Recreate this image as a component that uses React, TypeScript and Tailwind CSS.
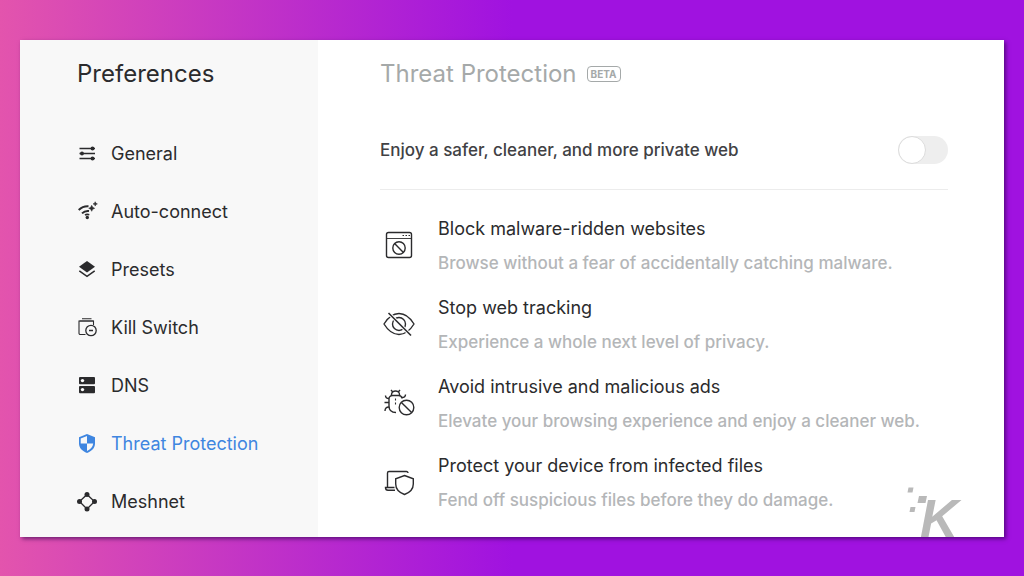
import { useState } from "react";
import type { ReactNode } from "react";

interface NavItem {
  label: string;
  icon: ReactNode;
}

interface Feature {
  title: string;
  description: string;
  icon: ReactNode;
}

function GeneralIcon() {
  return (
    <svg viewBox="0 0 20 20" className="size-5" fill="none" stroke="currentColor" strokeWidth="1.3" aria-hidden="true">
      <path d="M2.500 4.500H18M2.500 9.500H18M2.500 14.500H18" />
      <g fill="currentColor" stroke="none">
        <circle cx="15.500" cy="4.500" r="1.900" />
        <circle cx="5" cy="9.500" r="1.900" />
        <circle cx="15.500" cy="14.500" r="1.900" />
      </g>
    </svg>
  );
}

function AutoConnectIcon() {
  return (
    <svg viewBox="0 0 20 20" className="size-5 overflow-visible" fill="none" stroke="currentColor" strokeWidth="2" aria-hidden="true">
      <path d="M1.700 8C4.500 5.300 7.500 4 11.500 4.300" />
      <path d="M5 11.400c2-2 4.300-2.800 7-2.400" />
      <path d="M8 13.200c1-.8 2.500-1 4.300-.5" strokeWidth="1.600" />
      <circle cx="10.300" cy="15.500" r="1.700" fill="currentColor" stroke="none" />
      <path d="M14.700 3.300l1 2 2 1-2 1-1 2-1-2-2-1 2-1z" fill="currentColor" strokeWidth=".5" />
      <path d="M18.200-.3l.7 1.500 1.500.7-1.500.7-.7 1.500-.7-1.500-1.500-.7 1.500-.7z" fill="currentColor" strokeWidth=".5" />
    </svg>
  );
}

function PresetsIcon() {
  return (
    <svg viewBox="0 0 20 20" className="size-5" aria-hidden="true">
      <path d="M10 1l8 5.700-8 5.700-8-5.700z" fill="currentColor" />
      <path d="M2.300 10.800l7.700 5.600 7.700-5.600" fill="none" stroke="currentColor" strokeWidth="1.500" />
    </svg>
  );
}

function KillSwitchIcon() {
  return (
    <svg viewBox="0 0 20 20" className="size-5" fill="none" stroke="currentColor" strokeWidth="1.100" aria-hidden="true">
      <path d="M5 .8h9.500M2.500 3h14" />
      <path d="M8.500 16.500H3.300A1.300 1.300 0 0 1 2 15.200V3h14.500v4" />
      <circle cx="14" cy="12.500" r="5.200" strokeWidth="1.300" />
      <path d="M12 12.500h4" strokeWidth="1.500" />
    </svg>
  );
}

function DnsIcon() {
  return (
    <svg viewBox="0 0 20 20" className="size-5" aria-hidden="true">
      <rect x="2" y="1" width="16" height="7.300" rx="1" fill="currentColor" />
      <rect x="2" y="10" width="16" height="7.300" rx="1" fill="currentColor" />
      <circle cx="5.500" cy="4.600" r="1.700" fill="#fff" />
      <circle cx="5.500" cy="13.600" r="1.700" fill="#fff" />
    </svg>
  );
}

function ShieldIcon() {
  return (
    <svg viewBox="0 0 20 20" className="size-5" aria-hidden="true">
      <path d="M10 0l8 3.200v6.300c0 4.300-3.200 7.600-8 9.500-4.800-1.900-8-5.200-8-9.500V3.200z" fill="currentColor" />
      <path d="M10 2v7.500H3.700V4.500z" fill="#f8f8f8" />
      <path d="M10 9.500h6.200c-.2 3.200-2.500 5.900-6.200 7.500z" fill="#f8f8f8" />
    </svg>
  );
}

function MeshnetIcon() {
  return (
    <svg viewBox="0 0 20 20" className="size-5" aria-hidden="true">
      <path d="M10 2.500l7.500 7-7.500 7.500-7.500-7.500z" fill="none" stroke="currentColor" strokeWidth="1.300" />
      <g fill="currentColor">
        <circle cx="10" cy="2.500" r="2.500" />
        <circle cx="17.500" cy="9.500" r="2.500" />
        <circle cx="10" cy="17" r="2.500" />
        <circle cx="2.500" cy="9.500" r="2.500" />
      </g>
    </svg>
  );
}

function BlockedWindowIcon() {
  return (
    <svg viewBox="0 0 32 32" className="size-8" fill="none" stroke="currentColor" strokeWidth="1.400" aria-hidden="true">
      <rect x="3.500" y="2.500" width="25" height="25" rx="2" />
      <path d="M3.500 8.500h25" strokeWidth=".9" />
      <path d="M19.500 5.500H21M22.500 5.500H24M25.500 5.500H27" strokeWidth="1" />
      <circle cx="16" cy="18" r="6.200" />
      <path d="M11.600 13.600l8.800 8.800" />
    </svg>
  );
}

function HiddenEyeIcon() {
  return (
    <svg viewBox="0 0 32 32" className="size-8" fill="none" stroke="currentColor" strokeWidth="1.400" aria-hidden="true">
      <path d="M1 15C5 8.500 10 4.500 16 4.500S27 8.500 31 15c-4 6.500-9 10.500-15 10.500S5 21.500 1 15z" />
      <circle cx="16" cy="15" r="6.500" />
      <path d="M5.500 4L28 26.500" stroke="#fff" strokeWidth="3.500" />
      <path d="M5.500 4L28 26.500" strokeWidth="1.600" />
    </svg>
  );
}

function BlockedBugIcon() {
  return (
    <svg viewBox="0 0 32 32" className="size-8" fill="none" stroke="currentColor" strokeWidth="1.400" aria-hidden="true">
      <path d="M8.500 7.500V6.500a4 3.500 0 0 1 8 0v1M8 2l2 2.300M17 2l-2 2.300" />
      <path d="M13 24.500c-4.500 0-7-2.500-7-6.500v-7a3.500 3.500 0 0 1 3.500-3.500h6A3.500 3.500 0 0 1 19 10.500" />
      <path d="M2.500 7.500c0 2 1.500 3 3.500 3M22.500 6.500c0 2-1.300 3-3.500 3M1.500 14.500H6M2 23c0-2.800 1.500-4 4-4" />
      <path d="M12.500 10.500v2M12.500 14.500v2" strokeWidth="1.100" />
      <circle cx="23.500" cy="19.500" r="7.300" />
      <path d="M18.400 14.400l10.200 10.200" />
    </svg>
  );
}

function ProtectedDeviceIcon() {
  return (
    <svg viewBox="0 0 32 32" className="size-8" fill="none" stroke="currentColor" strokeWidth="1.400" aria-hidden="true">
      <path d="M4.500 20.500V6A1.500 1.500 0 0 1 6 4.500h17.500A1.500 1.500 0 0 1 25 6" />
      <path d="M11.500 20.500H2.500c0 1.800.8 2.800 2.500 2.800h7" />
      <path d="M21.500 8.500l8.800 3.300v5.200c0 5-3.400 8.500-8.800 10.500-5.400-2-8.800-5.500-8.800-10.500v-5.200z" />
    </svg>
  );
}

const navItems: NavItem[] = [
  { label: "General", icon: <GeneralIcon /> },
  { label: "Auto-connect", icon: <AutoConnectIcon /> },
  { label: "Presets", icon: <PresetsIcon /> },
  { label: "Kill Switch", icon: <KillSwitchIcon /> },
  { label: "DNS", icon: <DnsIcon /> },
  { label: "Threat Protection", icon: <ShieldIcon /> },
  { label: "Meshnet", icon: <MeshnetIcon /> },
];

const features: Feature[] = [
  {
    title: "Block malware-ridden websites",
    description: "Browse without a fear of accidentally catching malware.",
    icon: <BlockedWindowIcon />,
  },
  {
    title: "Stop web tracking",
    description: "Experience a whole next level of privacy.",
    icon: <HiddenEyeIcon />,
  },
  {
    title: "Avoid intrusive and malicious ads",
    description: "Elevate your browsing experience and enjoy a cleaner web.",
    icon: <BlockedBugIcon />,
  },
  {
    title: "Protect your device from infected files",
    description: "Fend off suspicious files before they do damage.",
    icon: <ProtectedDeviceIcon />,
  },
];

function Watermark() {
  return (
    <svg viewBox="0 0 60 52" className="absolute right-10 bottom-0 h-[52px] w-[60px] overflow-visible" fill="#b9b9b9" aria-hidden="true">
      <path d="M4.500 2.500h5l-1 5h-5zM15 11h8l-1.500 7h-8zM6.500 22h5l-1 5h-5z" />
      <text x="16" y="52" fontFamily="Liberation Sans, sans-serif" fontSize="53" fontWeight="700" fontStyle="italic">
        K
      </text>
    </svg>
  );
}

export default function App() {
  const [active, setActive] = useState("Threat Protection");
  const [enabled, setEnabled] = useState(false);

  return (
    <div className="flex min-h-screen bg-linear-to-r/srgb from-[#e354ad] via-[#a012e0] via-50% to-[#a012e0] px-5 pt-10 pb-[39px] font-['Inter',sans-serif] text-[#2b2b2d]">
      <div className="relative flex flex-1 bg-white shadow-[2px_2px_4px_rgba(40,0,70,0.6)]">
        <aside className="w-[298px] shrink-0 bg-[#f8f8f8] pt-4 pl-[57px]">
          <h1 className="text-2xl leading-9">Preferences</h1>
          <nav className="mt-12 flex flex-col gap-[30px]">
            {navItems.map((item) => (
              <button
                key={item.label}
                onClick={() => setActive(item.label)}
                className={`flex items-center gap-[14px] text-left text-lg leading-7 ${
                  active === item.label ? "text-[#3f86e0]" : ""
                }`}
              >
                {item.icon}
                {item.label}
              </button>
            ))}
          </nav>
        </aside>

        <main className="min-w-0 flex-1 pt-4 pr-14 pl-[62px]">
          <div className="flex items-center gap-[10px]">
            <h2 className="text-2xl leading-9 text-[#a5a9a9]">Threat Protection</h2>
            <span className="rounded-sm border border-[#a5a9a9] px-[3px] text-[10px] leading-[14px] font-bold text-[#a5a9a9]">
              BETA
            </span>
          </div>

          <div className="mt-11 flex items-center justify-between border-b border-[#ececec] pb-[25px]">
            <label htmlFor="threat-protection" className="text-[17px] leading-7 font-medium text-[#414144]">
              Enjoy a safer, cleaner, and more private web
            </label>
            <span className="relative flex h-7 w-[50px] shrink-0">
              <input
                id="threat-protection"
                type="checkbox"
                checked={enabled}
                onChange={(e) => setEnabled(e.target.checked)}
                className="peer size-full cursor-pointer appearance-none rounded-full bg-[#eeeeee] checked:bg-[#3f86e0]"
              />
              <span className="pointer-events-none absolute inset-y-0 left-0 w-7 rounded-full border border-[#dcdcdc] bg-white peer-checked:left-[22px]" />
            </span>
          </div>

          <ul className="mt-[25px] flex flex-col gap-[17px] pl-[3px]">
            {features.map((feature) => (
              <li key={feature.title} className="flex items-center gap-[23px]">
                {feature.icon}
                <div className="flex flex-col gap-1.5">
                  <h3 className="text-lg leading-7">{feature.title}</h3>
                  <p className="text-[17px] leading-7 font-medium text-[#b4b6b8]">{feature.description}</p>
                </div>
              </li>
            ))}
          </ul>
        </main>

        <Watermark />
      </div>
    </div>
  );
}
